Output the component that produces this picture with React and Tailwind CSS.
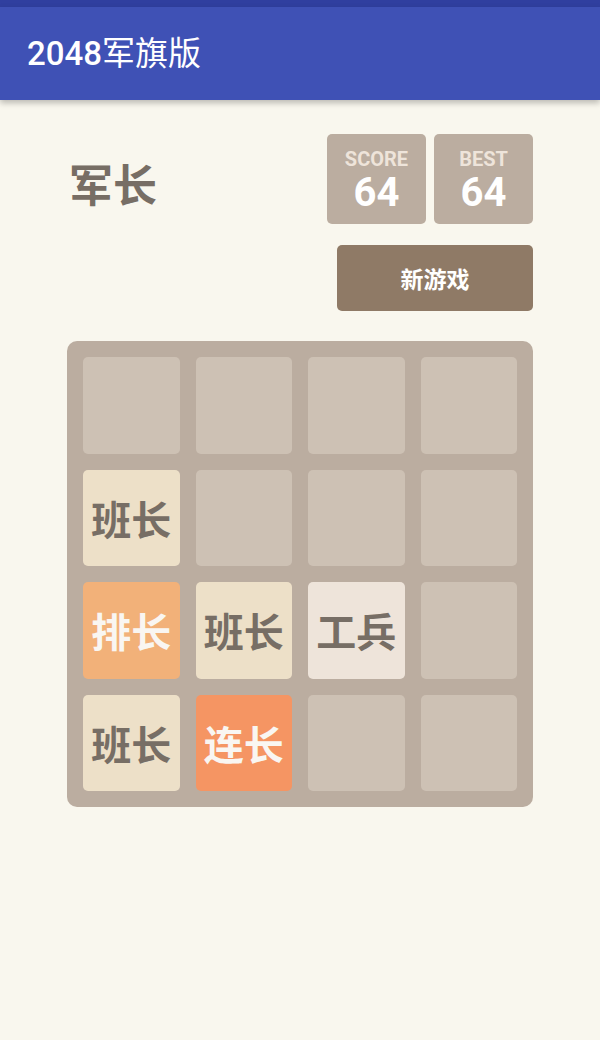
const cjk = '"Noto Sans CJK SC", "Noto Sans", sans-serif'
const latin = 'Roboto, "Noto Sans CJK SC", sans-serif'

const tileStyles = {
  0: 'bg-[#cdc1b4]',
  工兵: 'bg-[#eee4da] text-[#776e65]',
  班长: 'bg-[#ede0c8] text-[#776e65]',
  排长: 'bg-[#f2b179] text-[#f9f6f2]',
  连长: 'bg-[#f59563] text-[#f9f6f2]',
}

const board = [
  [0, 0, 0, 0],
  ['班长', 0, 0, 0],
  ['排长', '班长', '工兵', 0],
  ['班长', '连长', 0, 0],
]

const ScoreBox = ({ label, value }) => (
  <div className="w-[99px] h-[90px] rounded-[5px] bg-[#bbada0] flex flex-col items-center pt-[13px]" style={{ fontFamily: latin }}>
    <div className="text-[20px] leading-[24px] font-bold text-[#eee4da]">{label}</div>
    <div className="text-[40px] leading-[44px] font-bold text-white">{value}</div>
  </div>
)

export default function App() {
  return (
    <div className="min-h-[1040px] bg-[#f9f7ee]">
      <div className="h-[7px] bg-[#303f9f]" />
      <div className="h-[93px] bg-[#3f51b5] shadow-[0_3px_6px_rgba(0,0,0,0.25)] flex items-center px-[27px]">
        <h1 className="text-[33px] text-white" style={{ fontFamily: latin }}>
          <span className="font-medium">2048</span>
          <span className="font-normal">军旗版</span>
        </h1>
      </div>

      <div className="w-[466px] mx-auto pt-[34px]">
        <div className="flex items-center justify-between">
          <div className="pl-[2px] pt-[8px] text-[44px] font-bold text-[#776e65]" style={{ fontFamily: cjk }}>军长</div>
          <div className="flex gap-[8px]">
            <ScoreBox label="SCORE" value="64" />
            <ScoreBox label="BEST" value="64" />
          </div>
        </div>

        <div className="flex justify-end mt-[21px]">
          <button className="w-[196px] h-[66px] rounded-[5px] bg-[#8f7a66] text-white text-[23px] font-bold" style={{ fontFamily: cjk }}>
            新游戏
          </button>
        </div>

        <div className="mt-[30px] w-[466px] h-[466px] rounded-[10px] bg-[#bbada0] p-[16px] grid grid-cols-4 grid-rows-4 gap-[16px]">
          {board.flat().map((t, i) => (
            <div
              key={i}
              className={`rounded-[5px] flex items-center justify-center text-[40px] font-bold ${tileStyles[t]}`}
              style={{ fontFamily: cjk }}
            >
              {t || ''}
            </div>
          ))}
        </div>
      </div>
    </div>
  )
}
